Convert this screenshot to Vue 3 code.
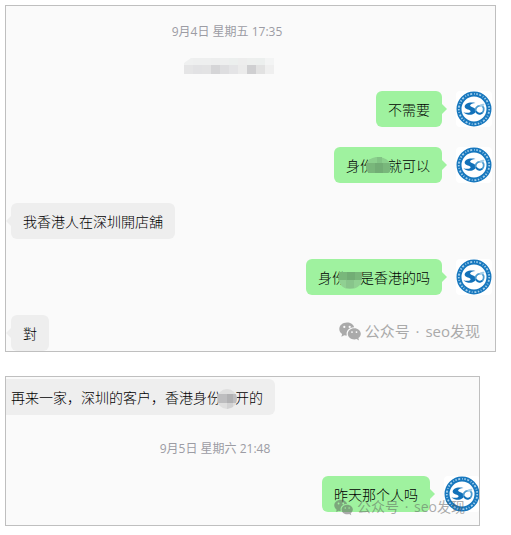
<script setup>
const days = [
  {
    id: 'first',
    items: [
      { kind: 'time', text: '9月4日 星期五 17:35' },
      { kind: 'hidden' },
      { kind: 'out', parts: ['不需要'] },
      { kind: 'out', parts: ['身份', '就可以'], mask: 'upper' },
      { kind: 'in', parts: ['我香港人在深圳開店舖'] },
      { kind: 'out', parts: ['身份', '是香港的吗'], mask: 'lower' },
      { kind: 'in', parts: ['對'] },
    ],
  },
  {
    id: 'second',
    items: [
      { kind: 'in', parts: ['再来一家，深圳的客户，香港身份', '开的'], mask: 'grey' },
      { kind: 'time', text: '9月5日 星期六 21:48' },
      { kind: 'out', parts: ['昨天那个人吗'] },
    ],
  },
]

const topCells = ['#eff0f0', '#eeefef', '#eeefef', '#edeeee', '#eeefef', '#ecefee', '#ededed', '#edefee', '#ecefee', '#f3f4f4']
const bottomCells = ['#e5e5e6', '#e2e2e4', '#e3e3e4', '#d5d5d7', '#dedee0', '#e4e4e6', '#ebebeb', '#cfcfd1', '#e2e2e2', '#efefef']
</script>

<template>
  <main class="page">
    <section v-for="day in days" :key="day.id" class="panel" :class="day.id">
      <div class="chat">
        <template v-for="(item, i) in day.items" :key="i">
          <time v-if="item.kind === 'time'" class="time">{{ item.text }}</time>
          <svg v-else-if="item.kind === 'hidden'" class="hidden" viewBox="0 0 90 16" shape-rendering="crispEdges" aria-hidden="true">
            <rect v-for="(c, n) in topCells" :key="'t' + n" :x="n * 9" y="0" width="9" height="7" :fill="c" />
            <rect v-for="(c, n) in bottomCells" :key="'b' + n" :x="n * 9" y="7" width="9" height="9" :fill="c" />
            <path d="M0 0H7L0 5Z" fill="#fafafa" shape-rendering="auto" />
          </svg>
          <div v-else class="row" :class="item.kind">
            <p class="bubble">
              <span>{{ item.parts[0] }}</span>
              <span v-if="item.mask" class="gap">
                <svg v-if="item.mask === 'upper'" class="mask" viewBox="0 0 24 16">
                  <path d="M0 7C2 2 7 0 12 0S22 2 24 7Z" fill="#8bd08d" />
                  <path d="M11 0H16V7H11Z" fill="#82c485" />
                  <path d="M0 6H24V14Q24 16 22 16H3Q0 14 0 11Z" fill="#79b77b" />
                  <path d="M9 6H17V16H9Z" fill="#72ad75" />
                </svg>
                <svg v-else-if="item.mask === 'lower'" class="mask low" viewBox="0 0 24 18">
                  <path d="M1 9H24C23 15 18 18 12 18S2 15 1 9Z" fill="#90d092" />
                  <path d="M8 9H16V17H8Z" fill="#88c48b" />
                  <path d="M1 1H24V9H0Z" fill="#79b77b" />
                  <path d="M9 1H17V9H9Z" fill="#72ad75" />
                </svg>
                <svg v-else class="mask round" viewBox="0 0 20 20">
                  <circle cx="10" cy="10" r="10" fill="#dedede" />
                  <path d="M0 5H19L20 10 19 14H1Z" fill="#bdbdbf" />
                  <path d="M10 5H16V14H10Z" fill="#b1b1b3" />
                  <path d="M10 14H16V18L10 20Z" fill="#d2d2d3" />
                </svg>
              </span>
              <span v-if="item.parts[1]">{{ item.parts[1] }}</span>
            </p>
            <svg v-if="item.kind === 'out'" class="avatar" viewBox="0 0 36 36" aria-hidden="true">
              <rect width="36" height="36" rx="4" fill="#fff" />
              <circle cx="18" cy="18" r="15" fill="none" stroke="#1878be" stroke-width="5" />
              <circle cx="18" cy="18" r="15.2" fill="none" stroke="#a5d0ec" stroke-width="1.8" stroke-dasharray="1.4 1.5 2 1.9 .8 1.6" />
              <path d="M19.5 12C13 10.6 8.3 13 8.7 16.1C9 18.5 14.8 18.7 14.6 20.3C14.3 22.1 10.8 22.2 7.4 21.3C12.3 25.7 19.8 24 20 19.6C20.2 16.4 13.9 16.2 14.1 14.5C14.3 12.9 17 12.2 19.5 12Z" fill="#1271b9" />
              <path d="M24.5 14.6C20.3 14.5 18.7 18.2 20.2 20.9C21.8 24 26.8 23.4 27.6 19.4C28 17.5 27.4 15.9 26 15.1" fill="none" stroke="#4b9bd0" stroke-width="1.7" />
              <path d="M23 15.5Q24 12.2 28.5 12.8Q27.8 16.4 23 15.5Z" fill="#a3cde8" />
              <path d="M20 20.4Q22 23.8 26.2 22" fill="none" stroke="#1271b9" stroke-width="1.8" />
            </svg>
          </div>
        </template>
      </div>
      <div class="watermark">
        <svg class="wechat" viewBox="0 0 22 19" aria-hidden="true">
          <path fill-rule="evenodd" d="M8 .5C3.6.5.3 3.4.3 7C.3 9.1 1.4 10.9 3.1 12.1L2.4 14.7L5.3 13.2Q6.5 13.6 7.9 13.6C6.5 9.2 10 5.5 15.2 5.3C14.4 2.5 11.5.5 8 .5ZM5.3 3.8A1.1 1.1 0 1 1 5.3 6A1.1 1.1 0 1 1 5.3 3.8ZM10.7 3.8A1.1 1.1 0 1 1 10.7 6A1.1 1.1 0 1 1 10.7 3.8Z" />
          <path fill-rule="evenodd" d="M15.3 6.2C11.5 6.2 8.8 8.7 8.8 11.8S11.7 17.4 15.3 17.4Q16.5 17.4 17.6 17L20 18.4L19.4 16.1C20.8 15.1 21.8 13.6 21.8 11.8C21.8 8.7 19 6.2 15.3 6.2ZM13 9.2A.9.9 0 1 1 13 11A.9.9 0 1 1 13 9.2ZM17.5 9.2A.9.9 0 1 1 17.5 11A.9.9 0 1 1 17.5 9.2Z" />
        </svg>
        <span>公众号 <span class="dot">·</span> seo发现</span>
      </div>
    </section>
  </main>
</template>

<style>
body {
  margin: 0;
  background: #fff;
}
</style>

<style scoped>
.page {
  display: flex;
  flex-direction: column;
  gap: 24px;
  padding: 5px 15px 9px 5px;
  font-family: "Open Sans", "Noto Sans CJK SC", sans-serif;
}

.panel {
  position: relative;
  overflow: hidden;
  border: 1px solid #bfbfbf;
  background: #fafafa;
}

.second {
  margin-right: 16px;
}

.chat {
  display: flex;
  flex-direction: column;
  gap: 20px;
  padding: 17px 3px 0 5px;
}

.second .chat {
  margin: 0 -4px 0 -12px;
  padding-top: 2px;
  padding-bottom: 13px;
}

.time {
  height: 16px;
  margin-right: 39px;
  margin-left: -5px;
  padding-right: 5px;
  text-align: center;
  font-size: 12px;
  line-height: 18px;
  color: #9c9ca4;
}

.first .time {
  margin-bottom: -1px;
}

.second .time {
  padding: 5px 5px 0 0;
}

.hidden {
  width: 90px;
  height: 16px;
  margin-left: 173px;
  margin-bottom: -3px;
}

.row {
  display: flex;
  gap: 14px;
}

.out {
  justify-content: flex-end;
}

.bubble {
  position: relative;
  display: flex;
  height: 36px;
  margin: 0;
  padding: 0 12px;
  border-radius: 6px;
  background: #eee;
  font-family: "Noto Sans CJK SC", sans-serif;
  font-size: 14px;
  font-weight: 300;
  line-height: 37px;
  color: #000;
  white-space: nowrap;
}

.out .bubble {
  background: #9ff29f;
}

.bubble::before {
  content: "";
  position: absolute;
  top: 13px;
  left: -5px;
  border: 5px solid transparent;
  border-left-width: 0;
  border-right-color: #eee;
}

.out .bubble::before {
  right: -5px;
  left: auto;
  border-width: 5px 0 5px 5px;
  border-left-color: #9ff29f;
}

.gap {
  position: relative;
  width: 14px;
}

.mask {
  position: absolute;
  top: 10px;
  left: -8px;
  width: 24px;
  height: 16px;
}

.low {
  top: 12px;
  height: 18px;
}

.round {
  top: 10px;
  left: -4px;
  width: 20px;
  height: 20px;
}

.avatar {
  width: 36px;
  height: 36px;
}

.watermark {
  position: absolute;
  right: 15px;
  bottom: 8px;
  display: flex;
  align-items: center;
  gap: 4px;
  font-size: 15px;
  line-height: 24px;
  color: #aaa;
}

.dot {
  padding: 0 2px;
}

.wechat {
  width: 22px;
  height: 19px;
  fill: currentColor;
}

.second .watermark {
  right: 14px;
  bottom: 6px;
  font-size: 14px;
  color: rgba(90, 90, 90, 0.5);
}

.second .wechat {
  width: 19px;
  height: 17px;
}
</style>
